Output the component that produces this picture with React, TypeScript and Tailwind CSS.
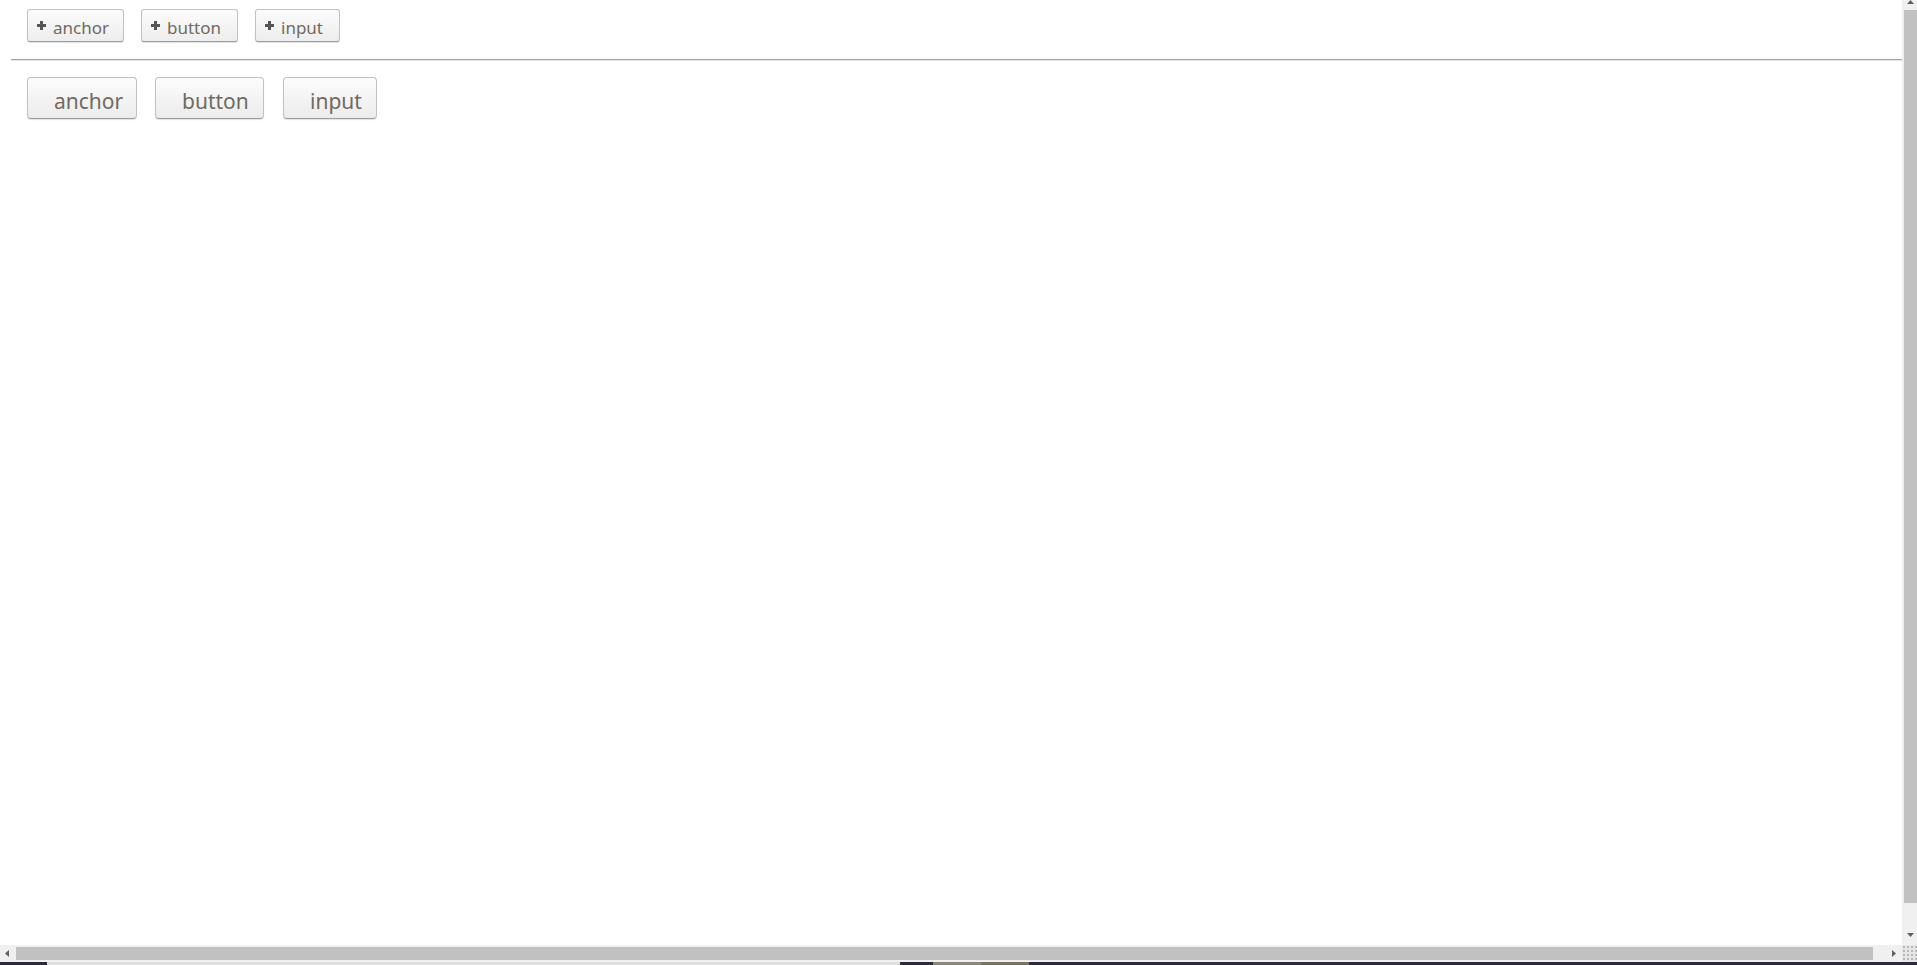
import React from "react";

const font = { fontFamily: '"Noto Sans", "Open Sans", sans-serif' };

function Plus() {
  return (
    <svg width="9" height="9" viewBox="0 0 9 9" className="shrink-0">
      <rect x="3" y="0" width="3" height="9" fill="#555555" />
      <rect x="0" y="3" width="9" height="3" fill="#555555" />
    </svg>
  );
}

function SmallButton({ label, w }: { label: string; w: string }) {
  return (
    <div
      className={`${w} h-[33px] flex items-center pt-[4px] pl-[9px] rounded-[3px] border border-[#c2c2c2] border-b-[#9c9c9c] bg-gradient-to-b from-[#fcfcfc] to-[#ededed] shadow-[0_1px_1px_rgba(0,0,0,0.12)] text-[17px] text-[#716a5f] leading-none`}
    >
      <span className="-mt-[5px] flex items-center">
        <Plus />
      </span>
      <span className="ml-[7px]">{label}</span>
    </div>
  );
}

function LargeButton({ label, w }: { label: string; w: string }) {
  return (
    <div
      className={`${w} h-[42px] flex items-center pt-[6px] pl-[26px] rounded-[4px] border border-[#c2c2c2] border-b-[#9c9c9c] bg-gradient-to-b from-[#fcfcfc] to-[#ececec] shadow-[0_1px_1px_rgba(0,0,0,0.12)] text-[21px] text-[#716a5f] leading-none`}
    >
      <span>{label}</span>
    </div>
  );
}

function Tri({ dir }: { dir: "up" | "down" | "left" | "right" }) {
  const pts: Record<string, string> = {
    up: "0,4 3.5,0 7,4",
    down: "0,0 7,0 3.5,4",
    left: "4,0 4,7 0,3.5",
    right: "0,0 4,3.5 0,7",
  };
  const vert = dir === "up" || dir === "down";
  return (
    <svg width={vert ? 7 : 4} height={vert ? 4 : 7} viewBox={vert ? "0 0 7 4" : "0 0 4 7"}>
      <polygon points={pts[dir]} fill="#606060" />
    </svg>
  );
}

export default function App() {
  return (
    <div className="w-[1917px] h-[965px] flex flex-col overflow-hidden bg-white" style={font}>
      <div className="flex flex-1 min-h-0">
        <main className="flex-1 pl-[11px] pt-[9px]">
          <div className="flex gap-[17px] ml-[16px]">
            <SmallButton label="anchor" w="w-[97px]" />
            <SmallButton label="button" w="w-[97px]" />
            <SmallButton label="input" w="w-[85px]" />
          </div>
          <div className="mt-[17px] border-t border-[#a3a3a3] border-b border-b-[#e4e4e4] h-[2px]" />
          <div className="flex mt-[16px] ml-[16px]">
            <LargeButton label="anchor" w="w-[110px]" />
            <div className="w-[18px]" />
            <LargeButton label="button" w="w-[109px]" />
            <div className="w-[19px]" />
            <LargeButton label="input" w="w-[94px]" />
          </div>
        </main>
        <div className="w-[15px] flex flex-col bg-[#f0f0f0]">
          <div className="h-[10px] flex justify-center pl-[2px]">
            <Tri dir="up" />
          </div>
          <div className="flex-1 ml-[2px] bg-[#c1c1c1]" />
          <div className="h-[24px]" />
          <div className="h-[18px] flex justify-center pl-[2px] pt-[6px]">
            <Tri dir="down" />
          </div>
        </div>
      </div>
      <div className="h-[17px] flex bg-[#f0f0f0]">
        <div className="w-[16px] flex items-center pl-[5px]">
          <Tri dir="left" />
        </div>
        <div className="w-[1857px] my-[2px] bg-[#c1c1c1]" />
        <div className="flex-1" />
        <div className="w-[17px] flex items-center pl-[7px]">
          <Tri dir="right" />
        </div>
        <div className="w-[15px] bg-[#e6e6e6] bg-[radial-gradient(#b8b8b8_0.8px,transparent_0.9px)] bg-[length:4px_4px]" />
      </div>
      <div className="h-[3px] flex bg-[#2c2a3b]">
        <div className="w-[47px]" />
        <div className="w-[853px] bg-[#dedede]" />
        <div className="w-[33px]" />
        <div className="w-[48px] bg-[#8a8878]" />
        <div className="w-[48px] bg-[#77755f]" />
      </div>
    </div>
  );
}
